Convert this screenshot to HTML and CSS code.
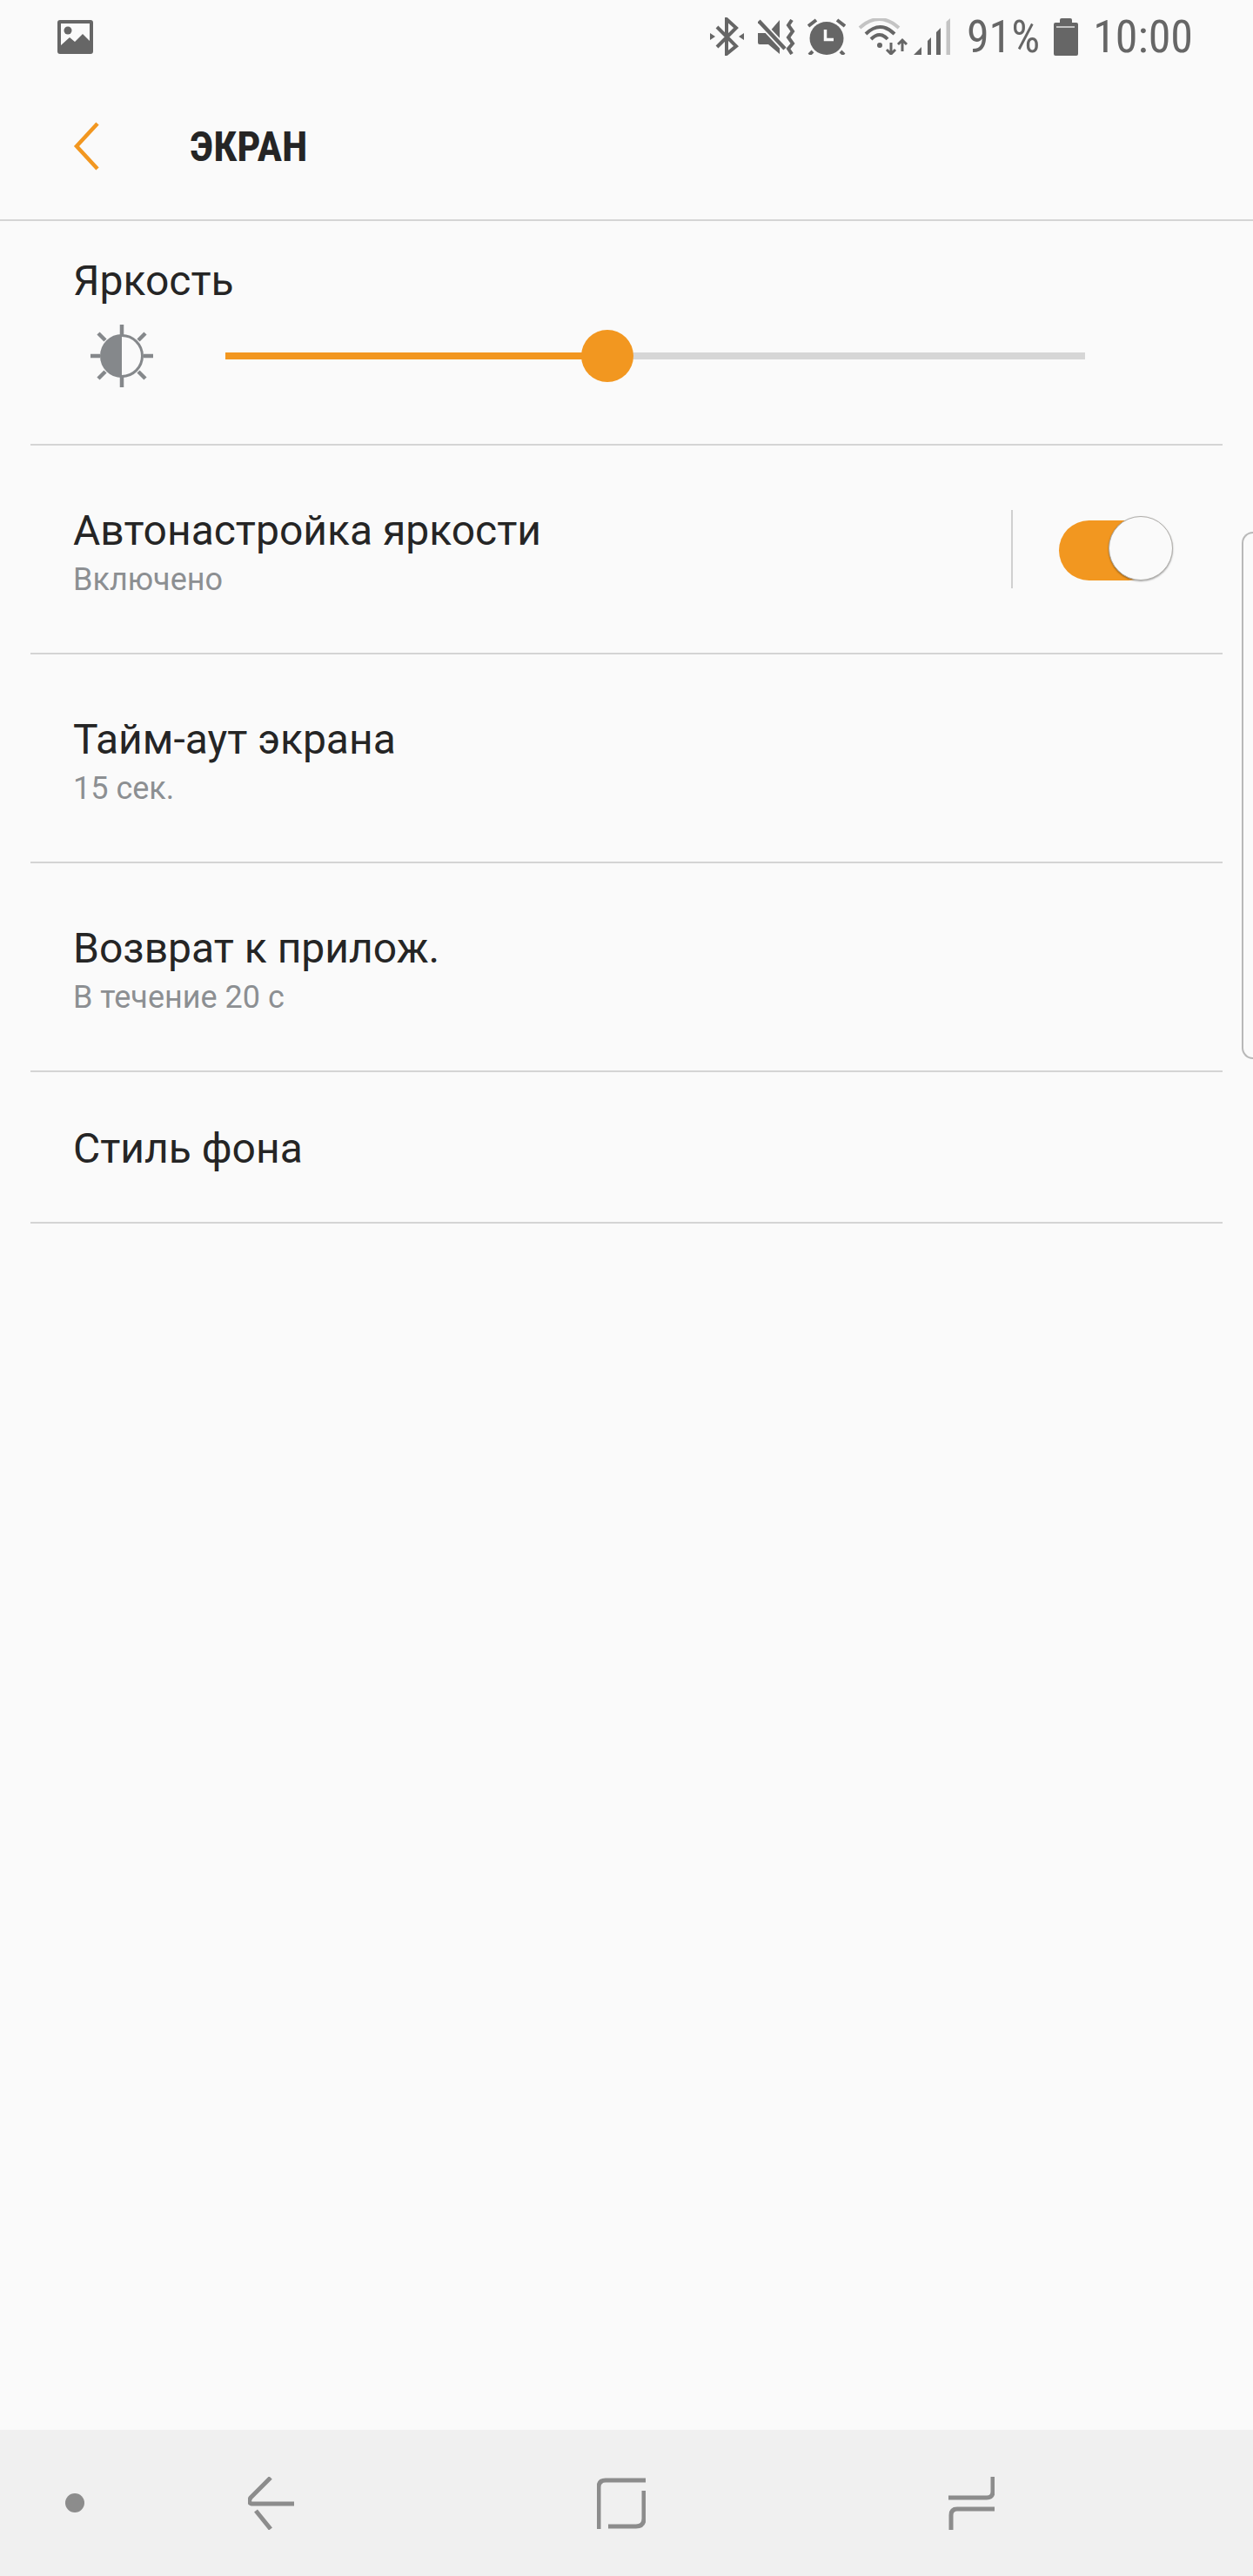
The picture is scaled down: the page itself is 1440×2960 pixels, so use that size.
FILE: index.html
```html
<!DOCTYPE html>
<html>
<head>
	<meta charset="utf-8">
	<title>Экран</title>
	<link rel="stylesheet" href="styles.css">
</head>
<body>
	<div class="page">
		<div class="status-bar">
			<svg class="ico-picture" width="41" height="39" viewBox="0 0 41 39">
				<rect width="41" height="39" rx="3" fill="#666"/>
				<path d="M4 4H37V24L29 16L20 25L14 20L4 29Z" fill="#fafafa"/>
				<circle cx="12" cy="12" r="4.5" fill="#666"/>
			</svg>
			<div class="status-right">
				<svg class="ico-bt" width="39" height="44" viewBox="0 0 39 44" fill="none" stroke="#666" stroke-width="4">
					<path d="M8 11L30 33L19 42V2L30 12L8 34"/>
					<path d="M0 18L6 22L0 26Z M39 18L33 22L39 26Z" fill="#666" stroke="none"/>
				</svg>
				<svg class="ico-mute" width="45" height="41" viewBox="0 0 45 41">
					<path d="M0 16H12L25 1V40L12 29H2Q0 29 0 27Z" fill="#666"/>
					<path d="M1 2L31 34" stroke="#fafafa" stroke-width="8"/>
					<path d="M1 2L31 34" stroke="#666" stroke-width="4.500"/>
					<path d="M39 1L35 7L40 14L35 21L40 28L35 34L39 40" fill="none" stroke="#666" stroke-width="4"/>
				</svg>
				<svg class="ico-alarm" width="44" height="42" viewBox="0 0 44 42" fill="none">
					<ellipse cx="22" cy="23" rx="19.5" ry="19" fill="#666"/>
					<path d="M20.5 13V24.500H30" stroke="#fafafa" stroke-width="3.500"/>
					<path d="M1 9L10 2M34 2L43 9M2 42L6 38M38 38L42 42" stroke="#666" stroke-width="4"/>
				</svg>
				<svg class="ico-wifi" width="58" height="42" viewBox="0 0 58 42" fill="none" stroke="#666" stroke-width="4">
					<path d="M2 11Q24.500 -9 47 11" stroke="#c4c4c4"/>
					<path d="M9 18Q25.500 2 42 18"/>
					<path d="M15 24Q25 14 34 24"/>
					<circle cx="25" cy="31" r="3" fill="#666" stroke="none"/>
					<path d="M38 28V41M33 36L38 41L43 36M51 38V25M46 30L51 25L56 30" stroke-width="3"/>
				</svg>
				<svg class="ico-signal" width="42" height="42" viewBox="0 0 42 42">
					<path d="M0 42L9 33V42Z M16 42V26L20 22V42Z M26 42V16L31 11V42Z" fill="#666"/>
					<path d="M37.500 42V4L42 0V42Z" fill="#c4c4c4"/>
				</svg>
				<span class="status-text pct">91%</span>
				<svg class="ico-battery" width="28" height="43" viewBox="0 0 28 43">
					<path d="M7 5V2Q7 0 9 0H19Q21 0 21 2V5H26Q28 5 28 7V41Q28 43 26 43H2Q0 43 0 41V7Q0 5 2 5Z" fill="#666"/>
					<rect x="3" y="9" width="21" height="2" fill="#c4c4c4"/>
				</svg>
				<span class="status-text clock">10:00</span>
			</div>
		</div>

		<div class="app-bar">
			<svg class="ico-back" width="30" height="56" viewBox="0 0 30 56" fill="none" stroke="#f29720" stroke-width="4.500">
				<path d="M28 2L4 28L28 54"/>
			</svg>
			<span class="app-title">ЭКРАН</span>
		</div>

		<div class="list">
			<div class="bright-row">
				<div class="title">Яркость</div>
				<div class="bright-ctl">
					<svg class="ico-sun" width="72" height="72" viewBox="0 0 72 72" fill="none" stroke="#85888b" stroke-width="4.500">
						<circle cx="36" cy="36" r="23.500" stroke-width="3"/>
						<path d="M36 12A24 24 0 0 0 36 60Z" fill="#85888b" stroke="none"/>
						<path d="M36 0V12M36 60V72M0 36H11M61 36H72M9 10L17 18M63 10L55 18M9 62L17 54M63 62L55 54"/>
					</svg>
					<div class="slider">
						<div class="slider-fill"></div>
						<div class="slider-thumb"></div>
					</div>
				</div>
			</div>

			<div class="row toggle-row">
				<div class="row-text">
					<div class="title">Автонастройка яркости</div>
					<div class="sub">Включено</div>
				</div>
				<div class="vline"></div>
				<div class="switch"><div class="switch-thumb"></div></div>
			</div>

			<div class="row">
				<div class="row-text">
					<div class="title">Тайм-аут экрана</div>
					<div class="sub">15 сек.</div>
				</div>
			</div>

			<div class="row">
				<div class="row-text">
					<div class="title">Возврат к прилож.</div>
					<div class="sub">В течение 20 с</div>
				</div>
			</div>

			<div class="row row-single">
				<div class="title">Стиль фона</div>
			</div>

			<div class="edge-handle"></div>
		</div>

		<div class="nav-bar">
			<div class="nav-dot"></div>
			<svg class="nav-back" width="53" height="61" viewBox="0 0 53 61" fill="none" stroke="#8c8c8c" stroke-width="5">
				<path d="M26 1L3 24Q-1 31 6 31H53"/>
				<path d="M9 39L26 60"/>
			</svg>
			<svg class="nav-recent" width="56" height="59" viewBox="0 0 56 59" fill="none" stroke="#8c8c8c" stroke-width="5">
				<path d="M56 3H10Q2 3 2 11V59"/>
				<path d="M54 15V47Q54 56 45 56H13"/>
			</svg>
			<svg class="nav-switch" width="53" height="62" viewBox="0 0 53 62" fill="none" stroke="#8c8c8c" stroke-width="5">
				<path d="M51 1V18Q51 25 44 25H0"/>
				<path d="M53 38H10Q3 38 3 45V62"/>
			</svg>
		</div>
	</div>
</body>
</html>
```

FILE: styles.css
```css
* {
	box-sizing: border-box;
}

body {
	margin: 0;
	font-family: 'Roboto', 'Liberation Sans', sans-serif;
	background-color: #fafafa;
}

.page {
	display: flex;
	flex-direction: column;
	height: 2960px;
}

/* status bar */
.status-bar {
	display: flex;
	align-items: center;
	justify-content: space-between;
	height: 84px;
	padding: 0 69px 0 66px;
	flex: none;
}
.status-right {
	display: flex;
	align-items: center;
}
.status-text {
	font-size: 52px;
	font-weight: 400;
	color: #666;
	font-stretch: 80%;
	white-space: nowrap;
}
.ico-mute {
	margin-left: 16px;
}
.ico-alarm {
	margin-left: 12px;
}
.ico-wifi {
	margin-left: 14px;
}
.ico-signal {
	margin-left: 6px;
}
.pct {
	margin-left: 19px;
}
.ico-battery {
	margin-left: 16px;
}
.clock {
	margin-left: 17px;
}

/* app bar */
.app-bar {
	display: flex;
	align-items: center;
	height: 170px;
	padding-left: 84px;
	border-bottom: 2px solid #d4d4d4;
	flex: none;
}
.app-title {
	margin-left: 104px;
	font-size: 48px;
	font-weight: 700;
	font-stretch: 78%;
	color: #252525;
}

/* list */
.list {
	position: relative;
	flex: 1;
	padding: 0 35px;
}
.title {
	font-size: 48px;
	line-height: 56px;
	color: #252525;
}
.sub {
	font-size: 36px;
	line-height: 40px;
	margin-top: 8px;
	color: #8c8f92;
}
.bright-row {
	height: 258px;
	padding: 41px 0 0 49px;
	border-bottom: 2px solid #d4d4d4;
}
.bright-ctl {
	display: flex;
	align-items: center;
	margin-top: 22px;
	margin-left: 20px;
}
.slider {
	position: relative;
	width: 988px;
	height: 8px;
	margin-left: 83px;
	background-color: #d6d6d6;
}
.slider-fill {
	width: 440px;
	height: 100%;
	background-color: #f29720;
}
.slider-thumb {
	position: absolute;
	left: 409px;
	top: -26px;
	width: 60px;
	height: 60px;
	border-radius: 50%;
	background-color: #f29720;
}
.row {
	display: flex;
	align-items: center;
	height: 240px;
	padding-left: 49px;
	border-bottom: 2px solid #d4d4d4;
}
.row-text {
	flex: 1;
	padding-top: 5px;
}
.row-single {
	height: 174px;
	padding-top: 3px;
}
.vline {
	width: 2px;
	height: 90px;
	background-color: #d0d0d0;
}
.switch {
	position: relative;
	width: 114px;
	height: 69px;
	margin: 2px 74px 0 53px;
	border-radius: 35px;
	background-color: #f29720;
}
.switch-thumb {
	position: absolute;
	top: -5px;
	left: 57px;
	width: 74px;
	height: 74px;
	border-radius: 50%;
	background-color: #fafafa;
	border: 1px solid #b0aeaa;
	box-shadow: 0 1px 2px rgba(0, 0, 0, 0.35);
}
.edge-handle {
	position: absolute;
	right: 0;
	top: 357px;
	width: 13px;
	height: 606px;
	border: 2px solid #b8b8b8;
	border-right: none;
	border-radius: 13px 0 0 13px;
}

/* nav bar */
.nav-bar {
	display: flex;
	align-items: center;
	height: 168px;
	padding-left: 75px;
	background-color: #f0f0f0;
	flex: none;
}
.nav-dot {
	width: 22px;
	height: 22px;
	border-radius: 50%;
	background-color: #8c8c8c;
}
.nav-back {
	margin-left: 188px;
}
.nav-recent {
	margin-left: 348px;
}
.nav-switch {
	margin-left: 348px;
}
```
